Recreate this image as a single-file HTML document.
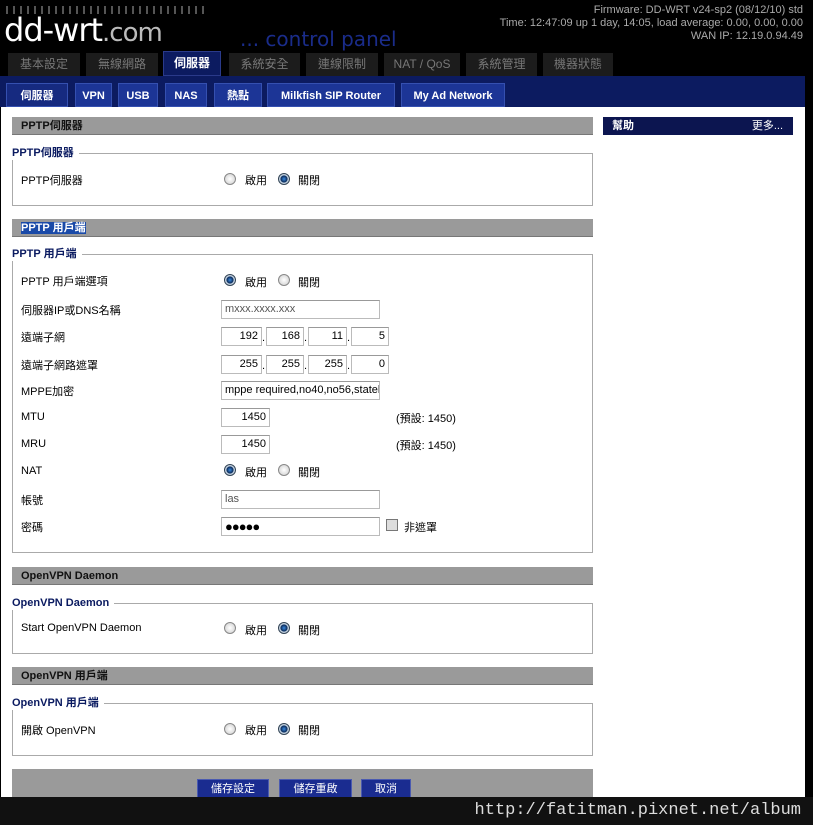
<!DOCTYPE html>
<html><head><meta charset="utf-8"><style>
*{margin:0;padding:0;box-sizing:border-box}
body{width:813px;height:825px;background:#000;position:relative;overflow:hidden;font-family:"Liberation Sans","Noto Sans CJK TC",sans-serif;font-size:11px;color:#000}
.a{position:absolute}
.tab{position:absolute;top:53px;height:23px;background:#1c1c1c;color:#777;font-size:12px;text-align:center;line-height:22px}
.tab.on{background:#0c1b60;color:#fff;font-weight:bold;top:51px;height:25px;border:1px solid #2a3a8a}
.st{position:absolute;top:83px;height:24px;background:#1c3596;color:#fff;font-weight:bold;font-size:11px;text-align:center;line-height:24px;border:1px solid #3550b0}
.st.on{background:#162a80}
.bar{position:absolute;left:12px;width:581px;height:18px;background:#9a9a9a;border-bottom:1px solid #777;font-weight:bold;font-size:11px;line-height:18px;padding-left:9px;color:#111}
.fs{position:absolute;left:12px;width:581px;border:1px solid #aaa;border-top:none}
.fs:before{content:"";position:absolute;left:0;right:-1px;top:0;border-top:1px solid #aaa}
.lg{position:absolute;left:12px;background:#fff;color:#0a1a60;font-weight:bold;font-size:11px;padding-right:5px;line-height:14px}
.lb{position:absolute;left:21px;font-size:11px}
.r{position:absolute;width:12px;height:12px;border-radius:50%;border:1px solid #888;background:radial-gradient(#fff,#ccc)}
.r.s{background:radial-gradient(#3a8adf 0,#0a2a5a 45%,#bcd 55%,#eee 100%);border-color:#345}
.t{position:absolute;font-size:11px}
.in{position:absolute;height:19px;border:1px solid #bbb;background:#fff;font-size:11px;line-height:17px;padding:0 3px;border-top-color:#999}
.rt{text-align:right}
.btn{position:absolute;top:779px;height:19px;background:#1a2c90;color:#fff;font-size:11px;text-align:center;line-height:19px;border:1px solid #4a5ab0}
</style></head><body>
<div class="a" style="left:6px;top:6px;width:200px;height:8px;background:repeating-linear-gradient(90deg,#555 0 2px,transparent 2px 7px)"></div>
<div class="a" style="left:4px;top:10px;font-size:32px;color:#fff;font-family:'DejaVu Sans',sans-serif;letter-spacing:-1px;line-height:40px">dd-wrt<span style="color:#bbb;font-size:26px">.com</span></div>
<div class="a" style="left:240px;top:27px;font-size:20px;color:#1a2c8a;font-family:'DejaVu Sans',sans-serif">... control panel</div>
<div class="a" style="right:10px;top:4px;color:#aaa;font-size:11px;text-align:right;line-height:13px">Firmware: DD-WRT v24-sp2 (08/12/10) std<br>Time: 12:47:09 up 1 day, 14:05, load average: 0.00, 0.00, 0.00<br>WAN IP: 12.19.0.94.49</div>
<div class="tab" style="left:8px;width:72px">基本設定</div>
<div class="tab" style="left:86px;width:72px">無線網路</div>
<div class="tab on" style="left:163px;width:58px">伺服器</div>
<div class="tab" style="left:229px;width:71px">系統安全</div>
<div class="tab" style="left:306px;width:72px">連線限制</div>
<div class="tab" style="left:384px;width:76px">NAT / QoS</div>
<div class="tab" style="left:466px;width:71px">系統管理</div>
<div class="tab" style="left:543px;width:70px">機器狀態</div>
<div class="a" style="left:0;top:76px;width:805px;height:31px;background:#0c1b60"></div>
<div class="st on" style="left:6px;width:62px">伺服器</div>
<div class="st" style="left:75px;width:37px">VPN</div>
<div class="st" style="left:118px;width:40px">USB</div>
<div class="st" style="left:165px;width:42px">NAS</div>
<div class="st" style="left:214px;width:48px">熱點</div>
<div class="st" style="left:267px;width:128px">Milkfish SIP Router</div>
<div class="st" style="left:401px;width:104px">My Ad Network</div>
<div class="a" style="left:1px;top:107px;width:804px;height:690px;background:#fff"></div>
<div class="a" style="left:603px;top:117px;width:190px;height:18px;background:#0c1550;color:#fff;font-weight:bold;line-height:18px;padding-left:9px">幫助<span style="position:absolute;right:10px;font-weight:normal">更多...</span></div>

<div class="bar" style="top:117px">PPTP伺服器</div>
<div class="fs" style="top:153px;height:53px"></div><div class="lg" style="top:146px">PPTP伺服器</div>
<div class="lb" style="top:172px">PPTP伺服器</div>
<div class="r" style="left:224px;top:173px"></div><div class="t" style="left:245px;top:172px">啟用</div>
<div class="r s" style="left:278px;top:173px"></div><div class="t" style="left:298px;top:172px">關閉</div>

<div class="bar" style="top:219px"><span style="background:#1a4aa8;color:#fff">PPTP 用戶端</span></div>
<div class="fs" style="top:254px;height:299px"></div><div class="lg" style="top:247px">PPTP 用戶端</div>
<div class="lb" style="top:273px">PPTP 用戶端選項</div>
<div class="r s" style="left:224px;top:274px"></div><div class="t" style="left:245px;top:274px">啟用</div>
<div class="r" style="left:278px;top:274px"></div><div class="t" style="left:298px;top:274px">關閉</div>
<div class="lb" style="top:302px">伺服器IP或DNS名稱</div>
<div class="in" style="left:221px;top:300px;width:159px;color:#555">mxxx.xxxx.xxx</div>
<div class="lb" style="top:329px">遠端子網</div>
<div class="in rt" style="left:221px;top:327px;width:41px">192</div><div class="t" style="left:262px;top:332px">.</div>
<div class="in rt" style="left:266px;top:327px;width:38px">168</div><div class="t" style="left:304px;top:332px">.</div>
<div class="in rt" style="left:308px;top:327px;width:39px">11</div><div class="t" style="left:347px;top:332px">.</div>
<div class="in rt" style="left:351px;top:327px;width:38px">5</div>
<div class="lb" style="top:357px">遠端子網路遮罩</div>
<div class="in rt" style="left:221px;top:355px;width:41px">255</div><div class="t" style="left:262px;top:360px">.</div>
<div class="in rt" style="left:266px;top:355px;width:38px">255</div><div class="t" style="left:304px;top:360px">.</div>
<div class="in rt" style="left:308px;top:355px;width:39px">255</div><div class="t" style="left:347px;top:360px">.</div>
<div class="in rt" style="left:351px;top:355px;width:38px">0</div>
<div class="lb" style="top:383px">MPPE加密</div>
<div class="in" style="left:221px;top:381px;width:159px;overflow:hidden;white-space:nowrap">mppe required,no40,no56,stateless</div>
<div class="lb" style="top:411px">MTU</div>
<div class="in rt" style="left:221px;top:408px;width:49px">1450</div>
<div class="t" style="left:396px;top:410px">(預設: 1450)</div>
<div class="lb" style="top:438px">MRU</div>
<div class="in rt" style="left:221px;top:435px;width:49px">1450</div>
<div class="t" style="left:396px;top:437px">(預設: 1450)</div>
<div class="lb" style="top:465px">NAT</div>
<div class="r s" style="left:224px;top:464px"></div><div class="t" style="left:245px;top:464px">啟用</div>
<div class="r" style="left:278px;top:464px"></div><div class="t" style="left:298px;top:464px">關閉</div>
<div class="lb" style="top:492px">帳號</div>
<div class="in" style="left:221px;top:490px;width:159px;color:#555">las</div>
<div class="lb" style="top:519px">密碼</div>
<div class="in" style="left:221px;top:517px;width:159px;font-size:13px;letter-spacing:-1px">●●●●●</div>
<div class="a" style="left:386px;top:519px;width:12px;height:12px;border:1px solid #777;background:#ddd"></div>
<div class="t" style="left:404px;top:519px">非遮罩</div>

<div class="bar" style="top:567px">OpenVPN Daemon</div>
<div class="fs" style="top:603px;height:51px"></div><div class="lg" style="top:596px">OpenVPN Daemon</div>
<div class="lb" style="top:622px">Start OpenVPN Daemon</div>
<div class="r" style="left:224px;top:622px"></div><div class="t" style="left:245px;top:622px">啟用</div>
<div class="r s" style="left:278px;top:622px"></div><div class="t" style="left:298px;top:622px">關閉</div>

<div class="bar" style="top:667px">OpenVPN 用戶端</div>
<div class="fs" style="top:703px;height:53px"></div><div class="lg" style="top:696px">OpenVPN 用戶端</div>
<div class="lb" style="top:722px">開啟 OpenVPN</div>
<div class="r" style="left:224px;top:723px"></div><div class="t" style="left:245px;top:722px">啟用</div>
<div class="r s" style="left:278px;top:723px"></div><div class="t" style="left:298px;top:722px">關閉</div>

<div class="a" style="left:12px;top:769px;width:581px;height:30px;background:#9a9a9a"></div>
<div class="btn" style="left:197px;width:72px">儲存設定</div>
<div class="btn" style="left:279px;width:73px">儲存重啟</div>
<div class="btn" style="left:361px;width:50px">取消</div>
<div class="a" style="left:0;top:797px;width:813px;height:28px;background:#111"></div>
<div class="a" style="right:12px;top:801px;color:#ddd;font-family:'Liberation Mono',monospace;font-size:17px">http://fatitman.pixnet.net/album</div>
</body></html>
